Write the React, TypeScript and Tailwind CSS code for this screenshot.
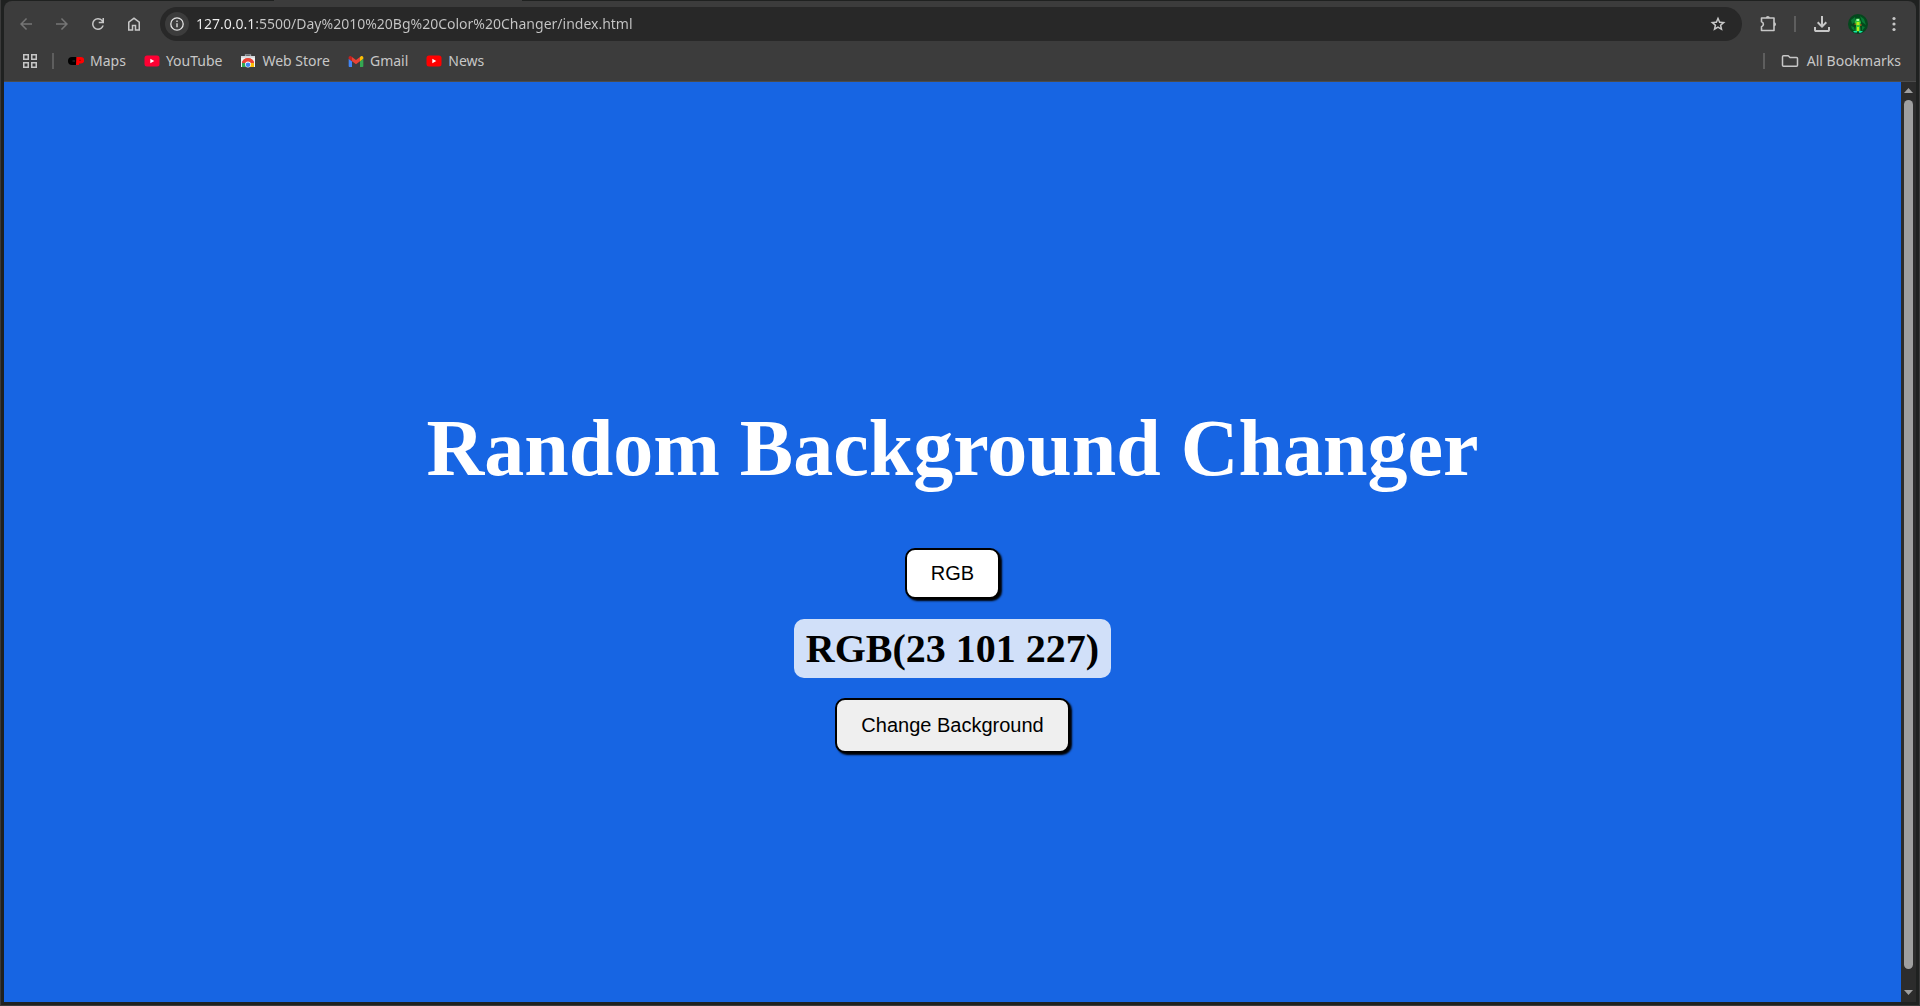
import React, { useState } from "react";

function Sym({ d, className }: { d: string; className: string }) {
  return (
    <svg viewBox="0 -960 960 960" fill="currentColor" className={className} aria-hidden="true">
      <path d={d} />
    </svg>
  );
}

const BACK = "m313-440 224 224-57 56-320-320 320-320 57 56-224 224h487v80H313Z";
const FORWARD = "M647-440H160v-80h487L423-744l57-56 320 320-320 320-57-56 224-224Z";
const RELOAD =
  "M480-160q-134 0-227-93t-93-227q0-134 93-227t227-93q69 0 132 28.5T720-690v-110h80v280H520v-80h168q-32-56-87.5-88T480-720q-100 0-170 70t-70 170q0 100 70 170t170 70q77 0 139-44t87-116h84q-28 106-114 173t-196 67Z";
const HOME =
  "M240-200h120v-240h240v240h120v-360L480-740 240-560v360Zm-80 80v-480l320-240 320 240v480H520v-240h-80v240H160Z";
const STAR =
  "m354-287 126-76 126 77-33-144 111-96-146-13-58-136-58 135-146 13 111 97-33 143ZM233-120l65-281L80-590l288-25 112-265 112 265 288 25-218 189 65 281-247-149-247 149Z";
const DOWNLOAD =
  "M480-320 280-520l56-58 104 104v-326h80v326l104-104 56 58-200 200ZM240-160q-33 0-56.5-23.5T160-240v-120h80v120h480v-120h80v120q0 33-23.5 56.5T720-160H240Z";

function IconButton({ label, className = "", children }: { label: string; className?: string; children: React.ReactNode }) {
  return (
    <button type="button" aria-label={label} className={`flex h-9 w-9 shrink-0 items-center justify-center ${className}`}>
      {children}
    </button>
  );
}

function MapsIcon() {
  return (
    <svg viewBox="0 0 16 16" className="h-4 w-4" aria-hidden="true">
      <path d="M4 4h4.500v8H4a4 4 0 0 1 0-8z" fill="#000" />
      <path d="M8.500 4h4.500a3 3 0 0 1 0 6.500h-2V12H8z" fill="#f00" />
      <path d="M4.500 8h2.500" stroke="#444" strokeWidth="0.800" />
      <path d="M11 7.300h2" stroke="#900" strokeWidth="0.800" />
    </svg>
  );
}

function PlayIcon({ color }: { color: string }) {
  return (
    <svg viewBox="0 0 16 16" className="h-4 w-4" aria-hidden="true">
      <rect x="0.500" y="2.500" width="15" height="11" rx="2.500" fill={color} />
      <path d="M6.300 5.800v4.400L10.300 8z" fill="#fff" />
    </svg>
  );
}

function StoreIcon() {
  return (
    <svg viewBox="0 0 16 16" className="h-4 w-4" aria-hidden="true">
      <path d="M5.500 4V1.800h5V4" fill="none" stroke="#9aa0a6" strokeWidth="1.300" />
      <path d="M1 3h14v11H1z" fill="#f1f3f4" />
      <path d="M1 3h14v1.800H1z" fill="#d5d8db" />
      <path d="M2 10.500a6 5 0 0 1 12 0z" fill="#ea4335" />
      <path d="M2 9.500V14h5l-2-4z" fill="#34a853" />
      <path d="M14 10v4H8l3-4z" fill="#fbbc04" />
      <path d="M2 10a6 5 0 0 1 12 0H5z" fill="#ea4335" />
      <circle cx="8" cy="11.500" r="2.900" fill="#fff" />
      <circle cx="8" cy="11.700" r="2.300" fill="#4285f4" />
    </svg>
  );
}

function GmailIcon() {
  return (
    <svg viewBox="52 42 88 66" className="h-[11px] w-4" aria-hidden="true">
      <path fill="#4285f4" d="M58 108h14V74L52 59v43c0 3.320 2.690 6 6 6" />
      <path fill="#34a853" d="M120 108h14c3.320 0 6-2.690 6-6V59l-20 15" />
      <path fill="#fbbc04" d="M120 48v26l20-15v-8c0-7.420-8.470-11.650-14.400-7.200" />
      <path fill="#ea4335" d="M72 74V48l24 18 24-18v26L96 92" />
      <path fill="#c5221f" d="M52 51v8l20 15V48l-5.600-4.200c-5.940-4.450-14.400-.22-14.400 7.200" />
    </svg>
  );
}

function Bookmark({ icon, label }: { icon: React.ReactNode; label: string }) {
  return (
    <a href="#" className="flex items-center gap-1.5">
      {icon}
      <span>{label}</span>
    </a>
  );
}

function Toolbar() {
  const [url, setUrl] = useState("127.0.0.1:5500/Day%2010%20Bg%20Color%20Changer/index.html");
  return (
    <div className="flex h-[46px] items-center px-1 text-[#c7c7c7]">
      <IconButton label="Back" className="text-[#757575]"><Sym d={BACK} className="h-[18px] w-[18px]" /></IconButton>
      <IconButton label="Forward" className="text-[#757575]"><Sym d={FORWARD} className="h-[18px] w-[18px]" /></IconButton>
      <IconButton label="Reload"><Sym d={RELOAD} className="h-[18px] w-[18px]" /></IconButton>
      <IconButton label="Home"><Sym d={HOME} className="h-[18px] w-[18px]" /></IconButton>
      <div className="mx-2 flex h-[34px] min-w-0 flex-1 items-center rounded-full bg-[#282828] pl-[5px] pr-1.5">
        <button type="button" aria-label="Site information" className="flex h-6 w-6 items-center justify-center rounded-full bg-[#3c3c3c]">
          <svg viewBox="0 0 16 16" className="h-4 w-4" fill="none" stroke="#e3e3e3" strokeWidth="1.300" aria-hidden="true">
            <circle cx="8" cy="8" r="6.200" />
            <path d="M8 7.200v4M8 4.600v1.400" />
          </svg>
        </button>
        <input
          type="text"
          aria-label="Address"
          value={url}
          onChange={(e) => setUrl(e.target.value)}
          className="ml-[7px] min-w-0 flex-1 bg-[linear-gradient(90deg,#f0f0f0_60px,#c7c7c7_60px)] bg-clip-text text-sm text-transparent caret-white outline-none"
        />
        <IconButton label="Bookmark this page"><Sym d={STAR} className="h-[18px] w-[18px]" /></IconButton>
      </div>
      <IconButton label="Extensions">
        <svg viewBox="0 0 20 20" className="h-5 w-5" fill="none" stroke="currentColor" strokeWidth="1.600" strokeLinejoin="round" aria-hidden="true">
          <path d="M3.500 4H16v12.500H3.500v-3.700a2.600 2.600 0 0 0 0-5z" />
          <path d="M7.800 4a2 2 0 0 1 4 0zM16 8.200a2 2 0 0 1 0 4z" fill="currentColor" stroke="none" />
        </svg>
      </IconButton>
      <div className="mx-2 h-4 w-0.5 bg-[#5e5e5e]" />
      <IconButton label="Downloads"><Sym d={DOWNLOAD} className="h-6 w-6" /></IconButton>
      <IconButton label="Profile">
        <svg viewBox="0 0 20 20" className="h-5 w-5" aria-hidden="true">
          <circle cx="10" cy="10" r="10" fill="#04481d" />
          <path d="M3 6l4-3 1 4-4 3zM12 2l4 3 2 6-4-3zM3 12l3 1 1 4-3-2zM14 12l3 1-3 4z" fill="#087a33" />
          <path d="M8.500 4.500h3l1.500 4-1 3 .5 6h-5l.5-6-1.500-3z" fill="#2fc43a" />
          <path d="M8.500 8h3v3h-3zM9 13h2v4H9z" fill="#b8ee18" />
          <path d="M8.500 5h2.500v2H8.500z" fill="#a4f5b2" />
          <path d="M5 17h4v1.500H6.500zM11 17h4l-2 1.800h-2z" fill="#16e3a5" />
          <path d="M6.500 9.500h1.500v1.500H6.500zM12 10h1.500v2H12z" fill="#8a5a18" />
        </svg>
      </IconButton>
      <IconButton label="Menu">
        <svg viewBox="0 0 20 20" className="h-5 w-5" fill="currentColor" aria-hidden="true">
          <circle cx="10" cy="4.500" r="1.600" /><circle cx="10" cy="10" r="1.600" /><circle cx="10" cy="15.500" r="1.600" />
        </svg>
      </IconButton>
    </div>
  );
}

function BookmarksBar() {
  return (
    <nav className="flex h-[34px] items-center justify-between pb-1.5 pl-[18px] pr-[15px] text-sm text-[#c7c7c7]">
      <div className="flex items-center">
        <button type="button" aria-label="Apps" className="mr-3.5">
          <svg viewBox="0 0 16 16" className="h-4 w-4" fill="none" stroke="currentColor" strokeWidth="1.500" aria-hidden="true">
            <path d="M1.750 1.750h4.500v4.500h-4.500zM9.750 1.750h4.500v4.500h-4.500zM1.750 9.750h4.500v4.500h-4.500zM9.750 9.750h4.500v4.500h-4.500z" />
          </svg>
        </button>
        <div className="mr-3.5 h-4 w-0.5 bg-[#5e5e5e]" />
        <div className="flex items-center gap-[18px]">
          <Bookmark icon={<MapsIcon />} label="Maps" />
          <Bookmark icon={<PlayIcon color="#ff0033" />} label="YouTube" />
          <Bookmark icon={<StoreIcon />} label="Web Store" />
          <Bookmark icon={<GmailIcon />} label="Gmail" />
          <Bookmark icon={<PlayIcon color="#ff0000" />} label="News" />
        </div>
      </div>
      <div className="flex items-center">
        <div className="mr-4 h-4 w-0.5 bg-[#5e5e5e]" />
        <button type="button" className="flex items-center gap-2">
          <svg viewBox="0 0 18 16" className="h-4 w-[18px]" fill="none" stroke="currentColor" strokeWidth="1.500" strokeLinejoin="round" aria-hidden="true">
            <path d="M2.500 2.750h4.700l1.800 1.800h6.500q1 0 1 1v6.700q0 1-1 1h-13q-1 0-1-1v-8.500q0-1 1-1z" />
          </svg>
          <span>All Bookmarks</span>
        </button>
      </div>
    </nav>
  );
}

function Scrollbar() {
  return (
    <div className="flex w-[15px] shrink-0 flex-col items-center bg-[#2c2c2c]" aria-hidden="true">
      <svg viewBox="0 0 15 18" className="h-[18px] w-[15px]" fill="#9f9f9f"><path d="M3 11h9L7.500 6z" /></svg>
      <div className="w-[9px] flex-1 rounded-full bg-[#9f9f9f]" />
      <svg viewBox="0 0 15 33" className="h-[33px] w-[15px]" fill="#9f9f9f"><path d="M3 21h9l-4.500 5z" /></svg>
    </div>
  );
}

export default function App() {
  const [color, setColor] = useState([23, 101, 227]);
  const change = () => setColor([0, 0, 0].map(() => Math.floor(Math.random() * 256)));
  return (
    <div className="flex min-h-screen flex-col border-x border-b border-[#3a3a3a] bg-[#1f2120] px-[3px] pb-[3px] font-['Noto_Sans',sans-serif]">
      <div className="flex h-px">
        <div className="w-[270px]" />
        <div className="w-[248px] bg-[#3c3c3c]" />
      </div>
      <header className="rounded-t-lg border-b border-[#4b4b4b] bg-[#3c3c3c]">
        <Toolbar />
        <BookmarksBar />
      </header>
      <div className="flex flex-1">
        <main
          className="flex flex-1 flex-col items-center justify-center gap-5 pt-[70px]"
          style={{ backgroundColor: `rgb(${color.join(" ")})` }}
        >
          <h1 className="mb-[34px] text-center font-['Liberation_Serif',serif] text-[80px] font-bold leading-[92px] text-white">
            Random Background Changer
          </h1>
          <button
            type="button"
            className="rounded-[10px] border-2 border-black bg-white px-6 py-3 font-['Liberation_Sans',sans-serif] text-xl leading-[23px] text-black shadow-[2px_2px_2px_#000]"
          >
            RGB
          </button>
          <h2 className="rounded-[10px] bg-white/80 px-3 py-[7px] font-['Liberation_Serif',serif] text-[40px] font-bold leading-[45px] text-black">
            RGB({color.join(" ")})
          </h2>
          <button
            type="button"
            onClick={change}
            className="rounded-[10px] border-2 border-black bg-[#efefef] px-6 py-3.5 font-['Liberation_Sans',sans-serif] text-xl leading-[23px] text-black shadow-[2px_2px_2px_#000]"
          >
            Change Background
          </button>
        </main>
        <Scrollbar />
      </div>
    </div>
  );
}
